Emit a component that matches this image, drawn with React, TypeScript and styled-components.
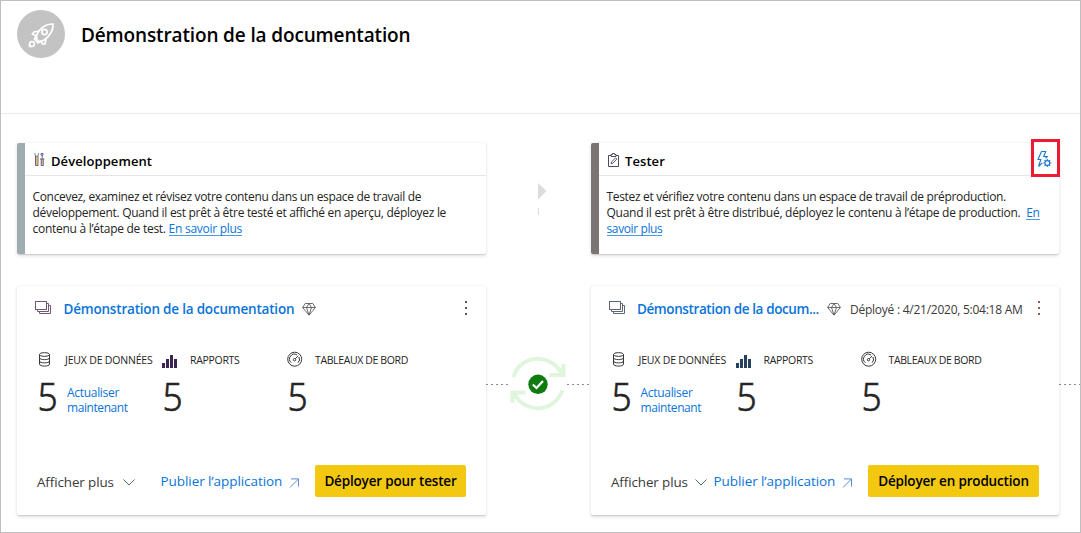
import React from "react";
import styled, { createGlobalStyle } from "styled-components";

const GlobalStyle = createGlobalStyle`
  *, *::before, *::after { box-sizing: border-box; }
  body { margin: 0; background: #fff; }
  p { margin: 0; }
`;

const Page = styled.div`
  width: 1081px;
  height: 533px;
  border: 1px solid #bfbfbf;
  background: #fff;
  color: #252423;
  font-family: "Open Sans", "Noto Sans", sans-serif;
  overflow: hidden;
  white-space: nowrap;
`;

const Header = styled.header`
  display: flex;
  height: 113px;
  padding: 9px 16px 0;
  border-bottom: 1px solid #eaeaea;
`;

const Avatar = styled.div`
  width: 48px;
  height: 48px;
  border-radius: 50%;
  background: #c3c3c3;
`;

const Title = styled.h1`
  margin: 0 0 0 16px;
  font-size: 19px;
  font-weight: 600;
  line-height: 50px;
  letter-spacing: -0.14px;
  color: #000;
`;

const Pipeline = styled.main`
  display: grid;
  grid-template-columns: 469px 105px 468px 21px;
  grid-template-rows: 111px 229px;
  row-gap: 32px;
  padding: 29px 0 0 16px;
`;

const Card = styled.section`
  display: flex;
  flex-direction: column;
  background: #fff;
  border-radius: 2px;
  box-shadow: 0 1.6px 3.6px rgba(0, 0, 0, 0.13), 0 0.3px 0.9px rgba(0, 0, 0, 0.1);
`;

const StageCard = styled(Card)<{ $accent: string }>`
  border-left: 8px solid ${(p) => p.$accent};
`;

const StageHead = styled.div`
  display: flex;
  height: 33px;
  padding-left: 8px;
  border-bottom: 1px solid #e6e6e6;
`;

const StageIcon = styled.div`
  width: 18px;
  padding-top: 8px;
`;

const StageName = styled.h2`
  margin: 0;
  flex: 1;
  font-size: 13px;
  font-weight: 600;
  line-height: 36px;
  letter-spacing: 0.08px;
  color: #000;
`;

const RulesButton = styled.div`
  width: 29px;
  height: 38px;
  margin: -4px -1px 0 0;
  border: 3px solid #ed1c35;
  padding: 8px 0 0 2px;
`;

const StageText = styled.div`
  padding: 13px 0 0 7.5px;
  font-size: 12px;
  line-height: 16px;
`;

const Line = styled.p<{ $track: number }>`
  letter-spacing: ${(p) => p.$track}px;
`;

const Link = styled.a`
  color: #0a74da;
  text-decoration: none;
  border-bottom: 1px solid #4d9ae6;
  display: inline-block;
  line-height: 13px;
`;

const ArrowGap = styled.div`
  display: flex;
  justify-content: center;
  padding: 40px 0 0 6px;
`;

const ConnectorGap = styled.div`
  display: flex;
  align-items: center;
  height: 196px;
`;

const Dashes = styled.div<{ $width: number }>`
  width: ${(p) => p.$width}px;
  height: 1px;
  background: repeating-linear-gradient(90deg, #8a8a8a 0 2px, transparent 2px 5px);
`;

const WorkspaceHead = styled.div<{ $inset: number }>`
  display: flex;
  height: 58px;
  padding: 14px 17px 0 ${(p) => p.$inset}px;
`;

const WorkspaceName = styled.div<{ $width: number; $track: number }>`
  width: ${(p) => p.$width}px;
  margin-left: 10.5px;
  font-size: 13.5px;
  font-weight: 600;
  line-height: 19px;
  letter-spacing: ${(p) => p.$track}px;
  color: #0a74da;
`;

const Deployed = styled.div`
  margin-left: 9px;
  font-size: 12px;
  line-height: 20px;
  letter-spacing: -0.25px;
  color: #3b3a39;
`;

const MoreDots = styled.div`
  margin-left: auto;
`;

const Metrics = styled.div<{ $inset: number }>`
  display: grid;
  grid-template-columns: 125px 125px 1fr;
  height: 110px;
  padding: 6px 0 0 ${(p) => p.$inset}px;
`;

const MetricLabel = styled.div<{ $track: number }>`
  display: flex;
  height: 20px;
  font-size: 10.5px;
  line-height: 21px;
  letter-spacing: ${(p) => p.$track}px;
`;

const MetricIcon = styled.div`
  width: 28px;
`;

const MetricValue = styled.div`
  display: flex;
  color: #252423;
`;

const Count = styled.div`
  width: 30px;
  font-family: "Noto Sans", sans-serif;
  font-size: 38px;
  line-height: 53px;
  font-weight: 300;
  -webkit-text-stroke: 0.6px #252423;
  transform: scaleX(0.93);
  transform-origin: 6px 0;
`;

const Refresh = styled.div`
  padding-top: 15px;
  font-size: 12px;
  line-height: 15px;
  letter-spacing: -0.42px;
  color: #0a74da;
  p:first-child { letter-spacing: -0.3px; }
`;

const Actions = styled.div`
  display: flex;
  align-items: center;
  height: 32px;
  margin: 11px 20px 0 20px;
`;

const ShowMore = styled.div<{ $width: number; $gap: number }>`
  display: flex;
  align-items: center;
  gap: ${(p) => p.$gap}px;
  width: ${(p) => p.$width}px;
  padding-top: 2px;
  font-size: 13.4px;
  letter-spacing: -0.1px;
  color: #3b3a39;
`;

const Publish = styled.div`
  display: flex;
  align-items: center;
  gap: 7px;
  margin-left: -0.5px;
  font-size: 13.5px;
  letter-spacing: -0.07px;
  color: #0a74da;
  svg { margin-top: 3px; }
`;

const Deploy = styled.button<{ $width: number }>`
  margin: 0 0 0 auto;
  width: ${(p) => p.$width}px;
  height: 32px;
  padding: 0;
  border: 0;
  border-radius: 2px;
  background: #f2c811;
  color: #000;
  font: 600 13.5px "Open Sans", "Noto Sans", sans-serif;
  letter-spacing: -0.17px;
`;

const Rocket = () => (
  <svg width="48" height="48" viewBox="0 0 48 48" fill="none" stroke="#fff" strokeWidth="1.7">
    <path d="M20 29.5 C17.5 25 25 13.5 36 14 C36.5 24 27 32 22 31.5 Z" />
    <circle cx="27.5" cy="22" r="2.6" />
    <path d="M22 21 L17 22 L15.5 24 L19 26 M29 29 L28 34 L25.5 34 L24 31 M19 26 L17.5 29 L21 33 L24 31" />
    <circle cx="15" cy="34" r="2.4" />
    <path d="M12.5 34 V36.5 H15" />
  </svg>
);

const ToolsIcon = () => (
  <svg width="12" height="16" viewBox="0 0 12 16" fill="none">
    <path d="M3.5 4 V13.8" stroke="#f0b070" strokeWidth="2" />
    <path d="M2.5 4 V13.5 H5 V4" stroke="#5c5a6c" strokeWidth="0.9" />
    <path d="M2 1.2 V3 L3 4.2 H4.4 L5.4 3 V1.2" stroke="#5f6f9a" strokeWidth="0.9" />
    <path d="M9 7 V13.8" stroke="#f0b070" strokeWidth="1.6" />
    <path d="M8 1.5 H10 V3.2 H8 Z M9.2 3.2 V6.8 M7 7 H11.5 M8.2 7 V13.5 H10.3 V7" stroke="#4f5878" strokeWidth="0.9" />
  </svg>
);

const ClipboardIcon = () => (
  <svg width="13" height="16" viewBox="0 0 13 16" fill="none" stroke="#4b4b62">
    <path d="M4 3.5 H1.5 V14.5 H11.5 V3.5 H9" />
    <path d="M4 4.5 V2.5 H5.5 V1.5 H7.5 V2.5 H9 V4.5 Z" />
    <path d="M4 11.8 L4.6 9.8 L8.6 5.9 L9.8 7.1 L6 11.1 Z" strokeWidth="0.9" />
  </svg>
);

const RulesIcon = () => (
  <svg width="16" height="18" viewBox="0 0 16 18" fill="none" stroke="#1877d2" strokeWidth="1.1">
    <path d="M5.5 1.5 H9.7 L7.7 6.5 H11.3 L9.5 8.4 M5.5 1.5 L2 9.5 H4.8 L2.6 16.5 L6.3 12.8" />
    <circle cx="11.3" cy="13" r="2.4" />
    <path d="M11.3 9 V10.4 M11.3 15.6 V17 M7.3 13 H8.7 M13.9 13 H15.3 M8.5 10.2 L9.5 11.2 M13.1 14.8 L14.1 15.8 M14.1 10.2 L13.1 11.2 M9.5 14.8 L8.5 15.8" />
  </svg>
);

const WorkspaceIcon = ({ color }: { color: string }) => (
  <svg width="18" height="16" viewBox="0 0 18 16" fill="none" stroke={color}>
    <rect x="0.5" y="1.5" width="11" height="8" />
    <path d="M12 3.5 H13.5 V11.5 H2.5 V10" />
    <path d="M14 5.5 H15.5 V13.5 H4.5 V12" />
  </svg>
);

const Diamond = () => (
  <svg width="14" height="20" viewBox="0 0 14 20" fill="none" stroke="#5c5b63" strokeWidth="0.9">
    <path d="M3.2 3.5 H10.8 L13.4 7.5 L7 15.2 L0.6 7.5 Z M0.6 7.5 H13.4 M4.5 7.5 L7 3.5 L9.5 7.5 L7 15 Z" />
  </svg>
);

const Dots = ({ color }: { color: string }) => (
  <svg width="6" height="20" viewBox="0 0 6 20" fill={color}>
    <rect x="2" y="1" width="2" height="2" />
    <rect x="2" y="7" width="2" height="2" />
    <rect x="2" y="13" width="2" height="2" />
  </svg>
);

const DatabaseIcon = () => (
  <svg width="16" height="18" viewBox="0 0 16 18" fill="none" stroke="#3a3939">
    <ellipse cx="7.5" cy="4.5" rx="5" ry="1.9" />
    <path d="M2.5 4.5 V14 C2.5 16.8 12.5 16.8 12.5 14 V4.5 M2.5 7.7 C2.5 10.3 12.5 10.3 12.5 7.7 M2.5 11 C2.5 13.5 12.5 13.5 12.5 11" />
  </svg>
);

const ReportsIcon = ({ color }: { color: string }) => (
  <svg width="16" height="18" viewBox="0 0 16 18" fill={color}>
    <rect x="0" y="13" width="3" height="5" />
    <rect x="4" y="9" width="3" height="9" />
    <rect x="8" y="5" width="3" height="13" />
    <rect x="12" y="9" width="3" height="9" />
  </svg>
);

const DashboardIcon = () => (
  <svg width="16" height="18" viewBox="0 0 16 18" fill="none" stroke="#3a3939">
    <circle cx="7.7" cy="9.2" r="7" />
    <path d="M4.3 12.7 A4.8 4.8 0 0 1 10 5 M11.9 7 A4.8 4.8 0 0 1 11.1 12.7" />
    <path d="M8.3 8.7 L11.2 5.9" />
    <circle cx="7.5" cy="9.7" r="1.2" />
  </svg>
);

const Chevron = () => (
  <svg width="12" height="8" viewBox="0 0 12 8" fill="none" stroke="#4f6b60">
    <path d="M0.5 1.5 L6 7 L11.5 1.5" />
  </svg>
);

const OpenArrow = () => (
  <svg width="11" height="10" viewBox="0 0 11 10" fill="none" stroke="#4a7fd0" strokeWidth="0.9">
    <path d="M1 9.5 L9.5 1 M2 0.9 H9.5 V8.5" />
  </svg>
);

const PointerArrow = () => (
  <svg width="10" height="36" viewBox="0 0 10 36">
    <path d="M1 0 L9.5 8 L1 16.5 Z" fill="#dcdcde" />
    <rect x="1" y="25" width="1" height="7" fill="#dcdcde" />
  </svg>
);

const SyncStatus = () => (
  <svg width="57" height="56" viewBox="0 0 57 56" fill="none" stroke="#dff6dd" strokeWidth="4">
    <path d="M3.5 21 C9.5 -1 39.5 -4 51.5 17 M53.5 8 V19 H39.5" />
    <path d="M52.5 34 C45.5 56 15.5 59 4.5 38 M2.5 47 V36.5 H15.5" />
    <circle cx="28" cy="28.3" r="9.7" fill="#107c10" stroke="none" />
    <path d="M22.8 28.5 L26.5 32 L33 25" stroke="#fff" strokeWidth="2.2" />
  </svg>
);

type WorkspaceProps = {
  name: string;
  nameWidth: number;
  nameTrack: number;
  headInset: number;
  metricInset: number;
  iconColor: string;
  barColor: string;
  dotColor: string;
  deployed?: string;
  showMoreWidth: number;
  showMoreGap: number;
  action: string;
  actionWidth: number;
};

type MetricProps = {
  icon: React.ReactNode;
  label: string;
  track: number;
  refresh?: boolean;
};

const Metric = ({ icon, label, track, refresh }: MetricProps) => (
  <div>
    <MetricLabel $track={track}>
      <MetricIcon>{icon}</MetricIcon>
      {label}
    </MetricLabel>
    <MetricValue>
      <Count>5</Count>
      {refresh && (
        <Refresh>
          <p>Actualiser</p>
          <p>maintenant</p>
        </Refresh>
      )}
    </MetricValue>
  </div>
);

const Workspace = (p: WorkspaceProps) => (
  <Card>
    <WorkspaceHead $inset={p.headInset}>
      <WorkspaceIcon color={p.iconColor} />
      <WorkspaceName $width={p.nameWidth} $track={p.nameTrack}>
        {p.name}
      </WorkspaceName>
      <Diamond />
      {p.deployed && <Deployed>{p.deployed}</Deployed>}
      <MoreDots>
        <Dots color={p.dotColor} />
      </MoreDots>
    </WorkspaceHead>
    <Metrics $inset={p.metricInset}>
      <Metric icon={<DatabaseIcon />} label="JEUX DE DONNÉES" track={-0.18} refresh />
      <Metric icon={<ReportsIcon color={p.barColor} />} label="RAPPORTS" track={-0.3} />
      <Metric icon={<DashboardIcon />} label="TABLEAUX DE BORD" track={-0.37} />
    </Metrics>
    <Actions>
      <ShowMore $width={p.showMoreWidth} $gap={p.showMoreGap}>
        Afficher plus
        <Chevron />
      </ShowMore>
      <Publish>
        Publier l’application
        <OpenArrow />
      </Publish>
      <Deploy $width={p.actionWidth}>{p.action}</Deploy>
    </Actions>
  </Card>
);

export default function App() {
  return (
    <Page>
      <GlobalStyle />
      <Header>
        <Avatar>
          <Rocket />
        </Avatar>
        <Title>Démonstration de la documentation</Title>
      </Header>
      <Pipeline>
        <StageCard $accent="#9fadb1">
          <StageHead>
            <StageIcon>
              <ToolsIcon />
            </StageIcon>
            <StageName>Développement</StageName>
          </StageHead>
          <StageText>
            <Line $track={-0.33}>Concevez, examinez et révisez votre contenu dans un espace de travail de</Line>
            <Line $track={-0.3}>développement. Quand il est prêt à être testé et affiché en aperçu, déployez le</Line>
            <Line $track={-0.27}>
              contenu à l’étape de test. <Link>En savoir plus</Link>
            </Line>
          </StageText>
        </StageCard>
        <ArrowGap>
          <PointerArrow />
        </ArrowGap>
        <StageCard $accent="#7a7574">
          <StageHead>
            <StageIcon>
              <ClipboardIcon />
            </StageIcon>
            <StageName>Tester</StageName>
            <RulesButton>
              <RulesIcon />
            </RulesButton>
          </StageHead>
          <StageText>
            <Line $track={-0.32}>Testez et vérifiez votre contenu dans un espace de travail de préproduction.</Line>
            <Line $track={-0.265}>
              Quand il est prêt à être distribué, déployez le contenu à l’étape de production.&nbsp; <Link>En</Link>
            </Line>
            <Line $track={-0.38}>
              <Link>savoir plus</Link>
            </Line>
          </StageText>
        </StageCard>
        <div />
        <Workspace
          name="Démonstration de la documentation"
          nameWidth={238}
          nameTrack={-0.2}
          headInset={18}
          metricInset={20}
          iconColor="#6e5a72"
          barColor="#3b2450"
          dotColor="#57517a"
          showMoreWidth={124}
          showMoreGap={9}
          action="Déployer pour tester"
          actionWidth={151}
        />
        <ConnectorGap>
          <Dashes $width={24} />
          <SyncStatus />
          <Dashes $width={24} />
        </ConnectorGap>
        <Workspace
          name="Démonstration de la docum..."
          nameWidth={190}
          nameTrack={-0.4}
          headInset={17.5}
          metricInset={19.5}
          iconColor="#5f6870"
          barColor="#25415c"
          dotColor="#8a5a50"
          deployed="Déployé : 4/21/2020, 5:04:18 AM"
          showMoreWidth={103}
          showMoreGap={7}
          action="Déployer en production"
          actionWidth={171}
        />
        <ConnectorGap>
          <Dashes $width={21} />
        </ConnectorGap>
      </Pipeline>
    </Page>
  );
}
